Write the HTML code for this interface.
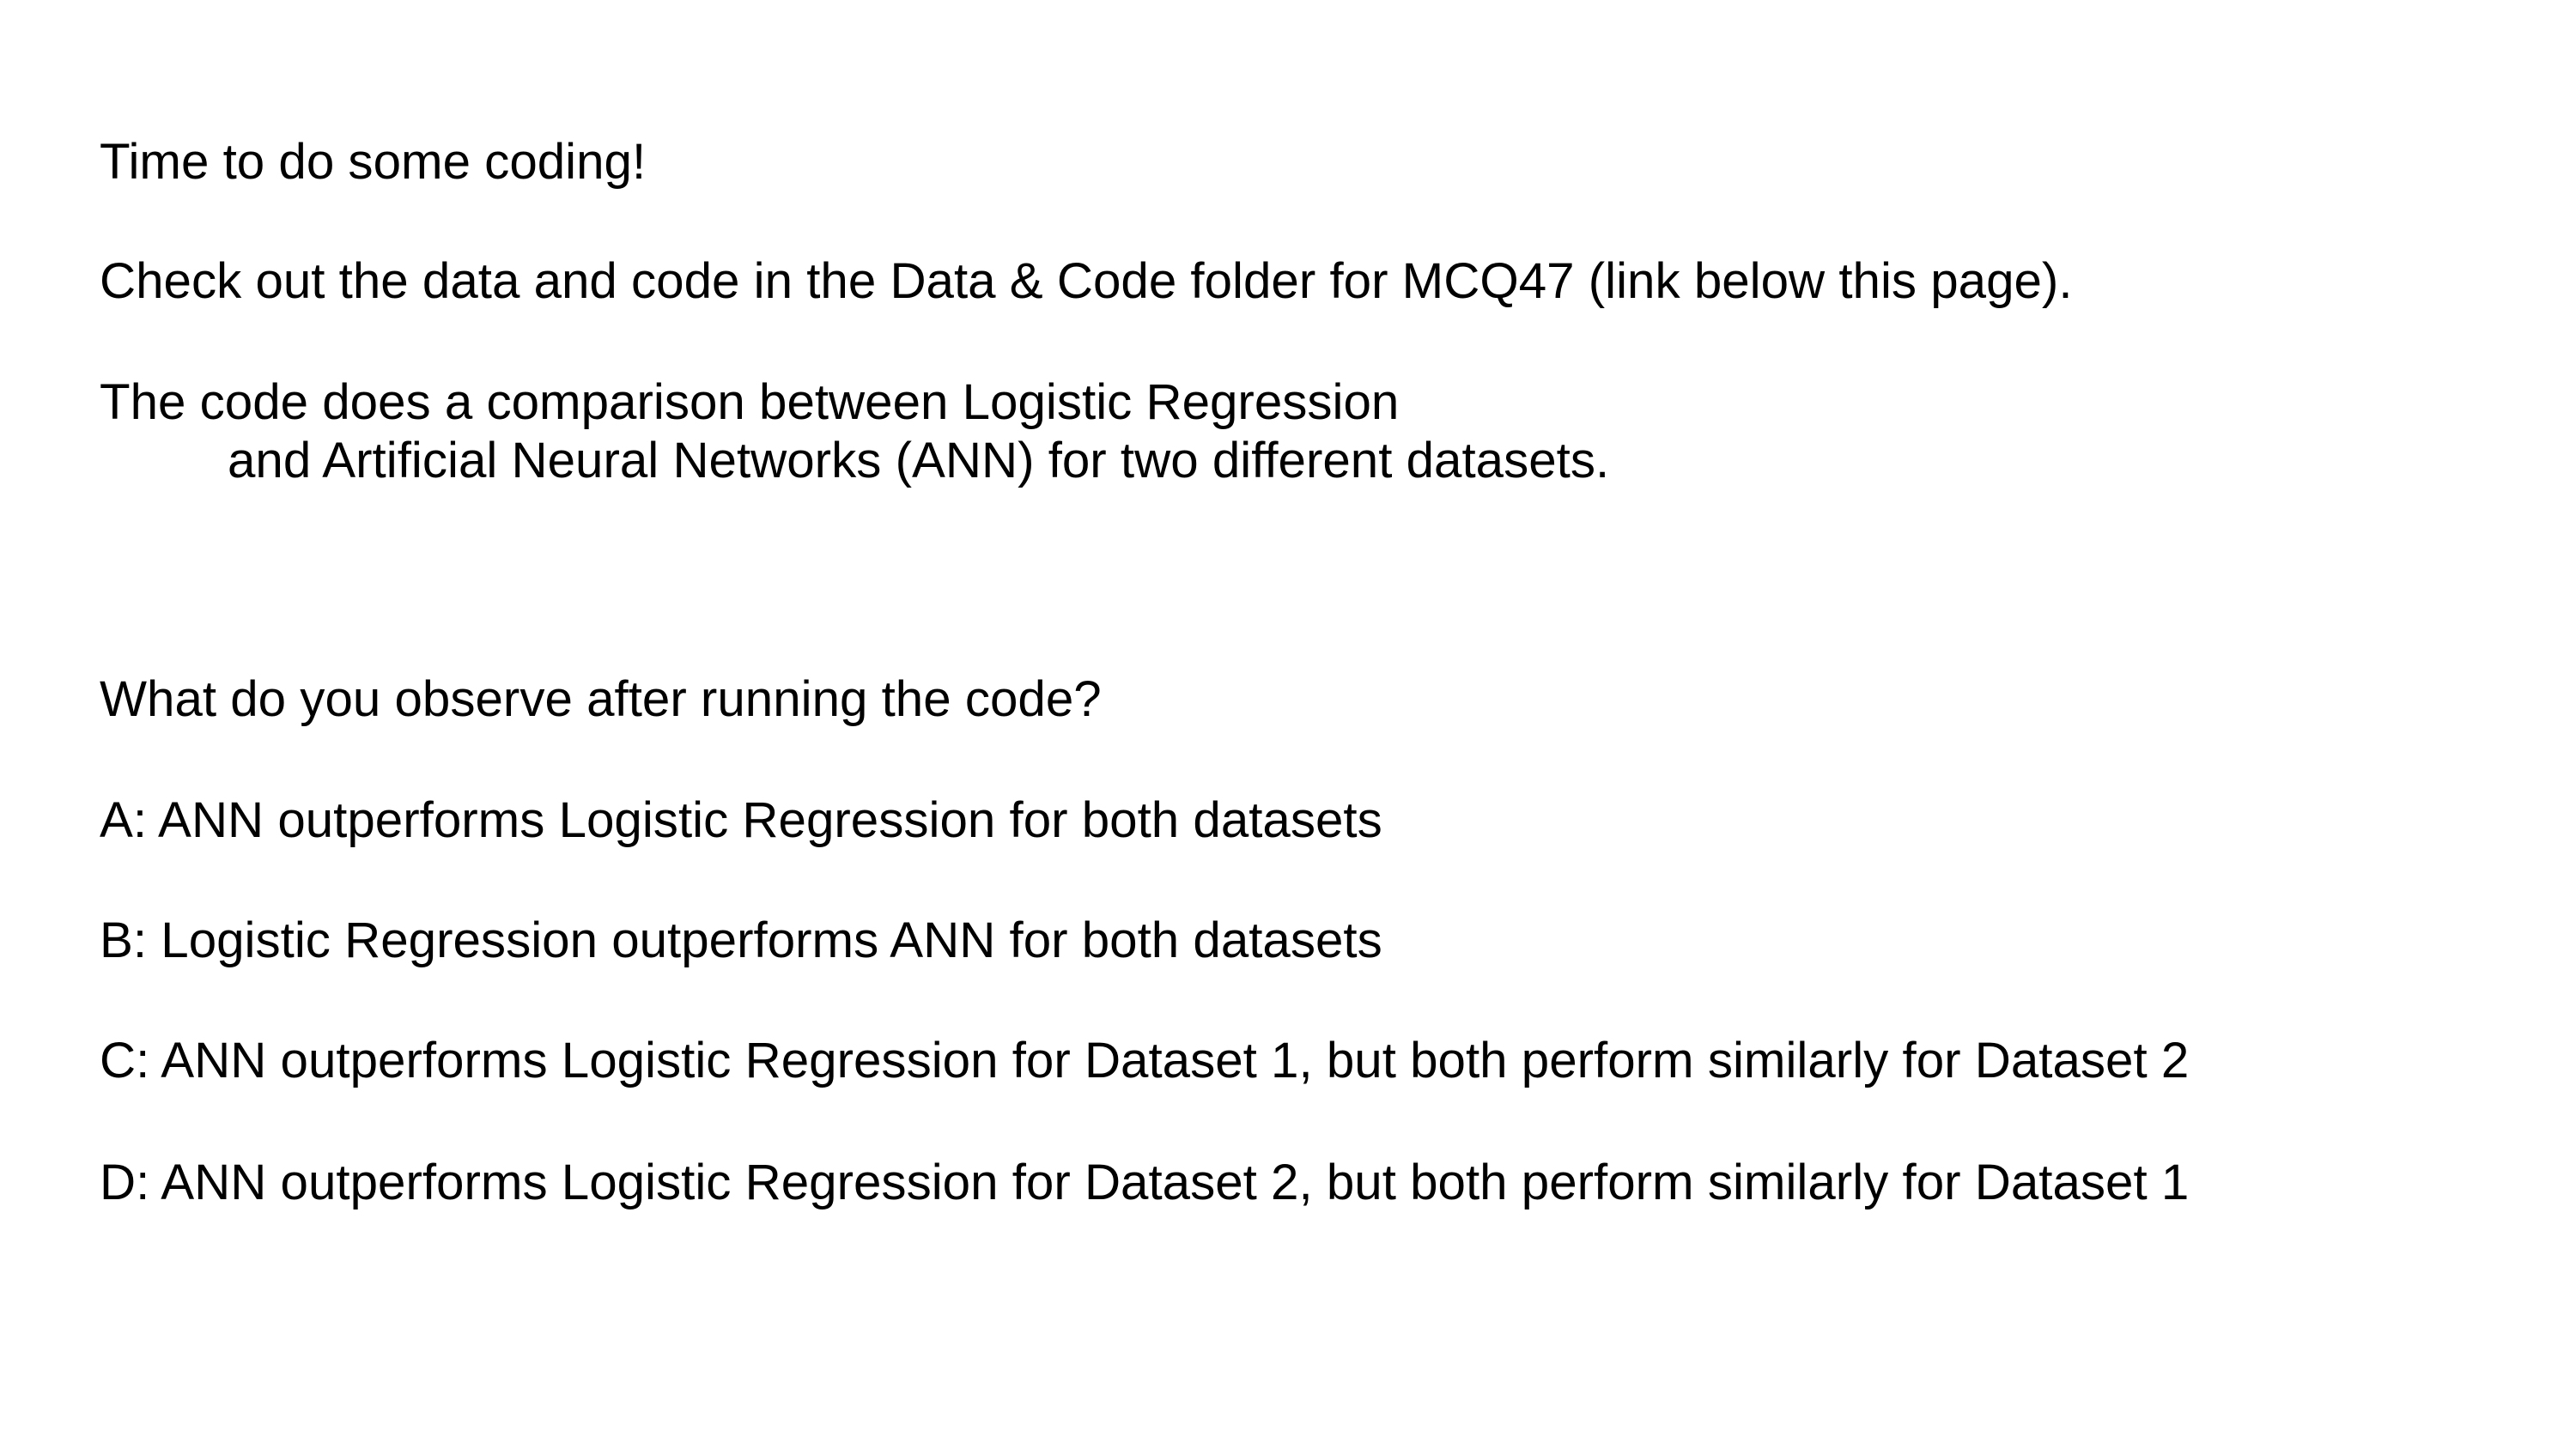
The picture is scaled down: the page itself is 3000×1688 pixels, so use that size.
<!DOCTYPE html>
<html><head><meta charset="utf-8"><style>
html,body{margin:0;padding:0;background:#fff;}
body{width:3000px;height:1688px;position:relative;overflow:hidden;font-family:"Liberation Sans",Arial,sans-serif;color:#000;}
.l{position:absolute;left:116px;font-size:58.3px;line-height:70px;white-space:pre;}
</style></head><body>
<div class="l" style="top:154px">Time to do some coding!</div>
<div class="l" style="top:293px">Check out the data and code in the Data &amp; Code folder for MCQ47 (link below this page).</div>
<div class="l" style="top:434px">The code does a comparison between Logistic Regression</div>
<div class="l" style="top:502px;left:265px">and Artificial Neural Networks (ANN) for two different datasets.</div>
<div class="l" style="top:780px">What do you observe after running the code?</div>
<div class="l" style="top:921px">A: ANN outperforms Logistic Regression for both datasets</div>
<div class="l" style="top:1061px">B: Logistic Regression outperforms ANN for both datasets</div>
<div class="l" style="top:1201px">C: ANN outperforms Logistic Regression for Dataset 1, but both perform similarly for Dataset 2</div>
<div class="l" style="top:1343px">D: ANN outperforms Logistic Regression for Dataset 2, but both perform similarly for Dataset 1</div>
</body></html>
